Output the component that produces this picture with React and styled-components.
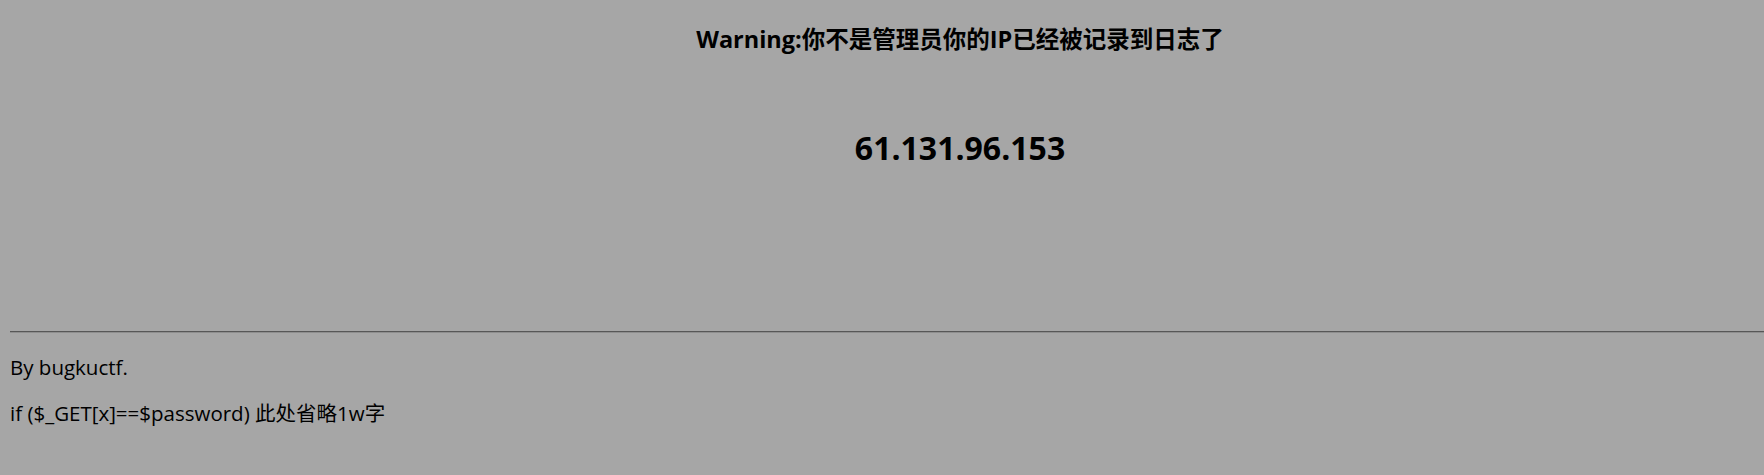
import styled, { createGlobalStyle } from 'styled-components'

const GlobalStyle = createGlobalStyle`
  html, body {
    margin: 0;
    padding: 0;
    overflow: hidden;
    background: #a6a6a6;
  }
  body {
    font-family: "Open Sans", "Noto Sans CJK SC", sans-serif;
    color: #000;
  }
`

const Page = styled.div`
  padding: 0 0 0 10px;
  min-height: 475px;
`

const Header = styled.div`
  display: flex;
  flex-direction: column;
  align-items: center;
  padding-left: 146px;
`

const Title = styled.h3`
  margin: 23px 0 0;
  font-size: 23.5px;
  line-height: 32px;
  font-weight: 700;
`

const Ip = styled.h1`
  margin: 72px 0 0;
  font-size: 32px;
  line-height: 42px;
  font-weight: 700;
`

const Rule = styled.hr`
  margin: 162px 0 0;
  border: none;
  border-top: 1px solid #575757;
  border-bottom: 1px solid #8e8e8e;
  height: 0;
`

const Text = styled.p`
  margin: ${p => p.$top}px 0 0;
  font-size: 20.5px;
  line-height: 28px;
`

export default function App() {
  return (
    <>
      <GlobalStyle />
      <Page>
        <Header>
          <Title>Warning:你不是管理员你的IP已经被记录到日志了</Title>
          <Ip>61.131.96.153</Ip>
        </Header>
        <Rule />
        <Text $top={20}>By bugkuctf.</Text>
        <Text $top={18}>if ($_GET[x]==$password) 此处省略1w字</Text>
      </Page>
    </>
  )
}
